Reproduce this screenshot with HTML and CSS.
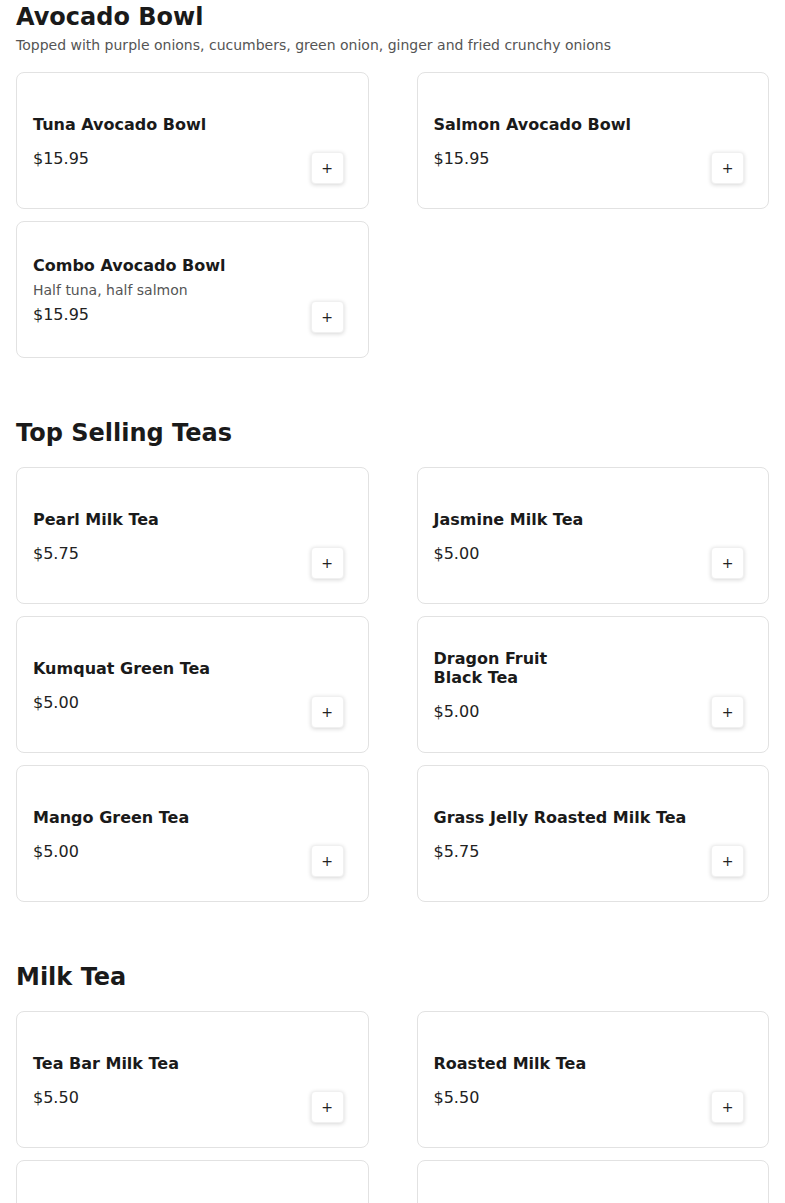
FILE: index.html
```html
<!DOCTYPE html>
<html>
<head>
<meta charset="utf-8">
<link rel="stylesheet" href="styles.css">
</head>
<body>
<main class="menu">
  <section class="section">
    <h2 class="section-title has-sub">Avocado Bowl</h2>
    <p class="section-sub">Topped with purple onions, cucumbers, green onion, ginger and fried crunchy onions</p>
    <div class="grid">
      <div class="card"><div class="info"><div class="name">Tuna Avocado Bowl</div><div class="price">$15.95</div></div><button class="add">+</button></div>
      <div class="card"><div class="info"><div class="name">Salmon Avocado Bowl</div><div class="price">$15.95</div></div><button class="add">+</button></div>
      <div class="card"><div class="info"><div class="name">Combo Avocado Bowl</div><div class="desc">Half tuna, half salmon</div><div class="price">$15.95</div></div><button class="add">+</button></div>
    </div>
  </section>
  <section class="section">
    <h2 class="section-title">Top Selling Teas</h2>
    <div class="grid">
      <div class="card"><div class="info"><div class="name">Pearl Milk Tea</div><div class="price">$5.75</div></div><button class="add">+</button></div>
      <div class="card"><div class="info"><div class="name">Jasmine Milk Tea</div><div class="price">$5.00</div></div><button class="add">+</button></div>
      <div class="card"><div class="info"><div class="name">Kumquat Green Tea</div><div class="price">$5.00</div></div><button class="add">+</button></div>
      <div class="card"><div class="info"><div class="name">Dragon Fruit<br>Black Tea</div><div class="price">$5.00</div></div><button class="add">+</button></div>
      <div class="card"><div class="info"><div class="name">Mango Green Tea</div><div class="price">$5.00</div></div><button class="add">+</button></div>
      <div class="card"><div class="info"><div class="name">Grass Jelly Roasted Milk Tea</div><div class="price">$5.75</div></div><button class="add">+</button></div>
    </div>
  </section>
  <section class="section">
    <h2 class="section-title">Milk Tea</h2>
    <div class="grid">
      <div class="card"><div class="info"><div class="name">Tea Bar Milk Tea</div><div class="price">$5.50</div></div><button class="add">+</button></div>
      <div class="card"><div class="info"><div class="name">Roasted Milk Tea</div><div class="price">$5.50</div></div><button class="add">+</button></div>
      <div class="card faded"><div class="info"><div class="name">Coconut Milk Tea</div><div class="price">$5.50</div></div><button class="add">+</button></div>
      <div class="card faded"><div class="info"><div class="name">Brown Sugar Milk Tea</div><div class="price">$5.75</div></div><button class="add">+</button></div>
    </div>
  </section>
</main>
</body>
</html>
```

FILE: styles.css
```css
* { box-sizing: border-box; }
html, body { margin: 0; padding: 0; background: #fff; }
body {
  font-family: "DejaVu Sans", "Liberation Sans", sans-serif;
  color: #1a1a1a;
}
.menu { padding: 2px 16px 40px; }
.section { margin-bottom: 60px; }
.section-title {
  margin: 0 0 19px;
  font-size: 24px;
  line-height: 30px;
  font-weight: bold;
  color: #1a1a1a;
}
.section-title.has-sub { margin-bottom: 3px; }
.section-sub {
  margin: 0 0 17px;
  font-size: 14px;
  line-height: 20px;
  color: #555;
}
.grid {
  display: grid;
  grid-template-columns: 1fr 1fr;
  column-gap: 48px;
  row-gap: 12px;
}
.card {
  display: flex;
  align-items: center;
  justify-content: space-between;
  min-height: 137px;
  padding: 20px 16px 16px;
  border: 1px solid #e2e2e2;
  border-radius: 8px;
  background: #fff;
}
.info { display: flex; flex-direction: column; }
.name {
  font-size: 16px;
  line-height: 19px;
  font-weight: bold;
  color: #1a1a1a;
}
.desc {
  margin-top: 5px;
  font-size: 14px;
  line-height: 20px;
  color: #555;
}
.price {
  font-size: 16px;
  line-height: 24px;
  color: #222;
}
.name + .price { margin-top: 13px; }
.desc + .price { margin-top: 3px; }
.add {
  align-self: flex-end;
  flex: none;
  width: 33px;
  height: 32px;
  margin: 0 8px 8px 0;
  padding: 0;
  border: 1px solid #f0f0f0;
  border-radius: 4px;
  background: #fff;
  box-shadow: 0 1px 4px rgba(0,0,0,0.16);
  font-family: "DejaVu Sans", sans-serif;
  font-size: 14px;
  line-height: 30px;
  color: #222;
  cursor: pointer;
}
.faded .info, .faded .add { opacity: 0.15; }
```
